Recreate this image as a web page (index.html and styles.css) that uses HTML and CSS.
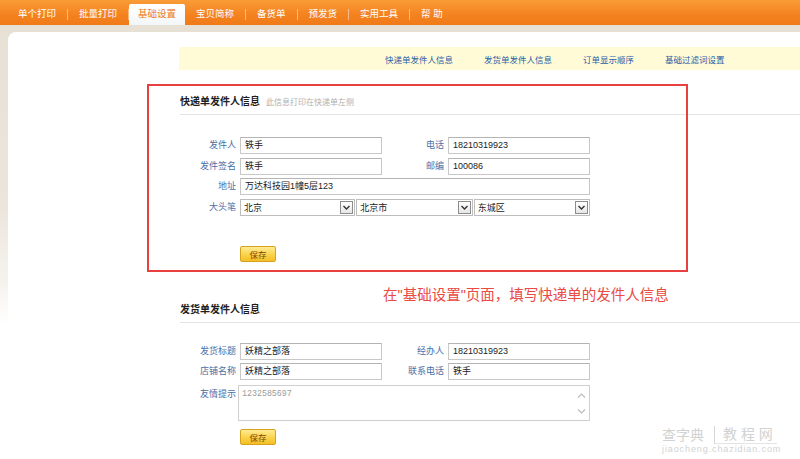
FILE: index.html
```html
<!DOCTYPE html>
<html lang="zh-CN">
<head>
<meta charset="utf-8">
<title>基础设置</title>
<link rel="stylesheet" href="styles.css">
</head>
<body>
<div class="topnav">
  <a class="nav-item">单个打印</a><span class="sep"></span>
  <a class="nav-item">批量打印</a><span class="sep"></span>
  <a class="nav-item active">基础设置</a>
  <a class="nav-item">宝贝简称</a><span class="sep"></span>
  <a class="nav-item">备货单</a><span class="sep"></span>
  <a class="nav-item">预发货</a><span class="sep"></span>
  <a class="nav-item">实用工具</a><span class="sep"></span>
  <a class="nav-item">帮 助</a>
</div>
<div class="page">
  <div class="panel">
    <div class="content">
      <div class="subnav">
        <a>快递单发件人信息</a>
        <a>发货单发件人信息</a>
        <a>订单显示顺序</a>
        <a>基础过滤词设置</a>
      </div>

      <section class="section">
        <div class="sec-head"><h2>快递单发件人信息</h2><span class="hint">此信息打印在快递单左侧</span></div>
        <div class="form">
          <label>发件人</label><div class="input">铁手</div>
          <label>电话</label><div class="input">18210319923</div>
          <label>发件签名</label><div class="input">铁手</div>
          <label>邮编</label><div class="input">100086</div>
          <label>地址</label><div class="input wide">万达科技园1幢5层123</div>
          <label>大头笔</label>
          <div class="selects">
            <div class="select s-first"><span>北京</span><span class="arrow"><svg width="9" height="9" viewBox="0 0 9 9"><polyline points="1.5,3 4.5,6 7.5,3" fill="none" stroke="#333" stroke-width="1.4"/></svg></span></div>
            <div class="select"><span>北京市</span><span class="arrow"><svg width="9" height="9" viewBox="0 0 9 9"><polyline points="1.5,3 4.5,6 7.5,3" fill="none" stroke="#333" stroke-width="1.4"/></svg></span></div>
            <div class="select"><span>东城区</span><span class="arrow"><svg width="9" height="9" viewBox="0 0 9 9"><polyline points="1.5,3 4.5,6 7.5,3" fill="none" stroke="#333" stroke-width="1.4"/></svg></span></div>
          </div>
        </div>
        <button class="btn">保存</button>
      </section>

      <section class="section second">
        <div class="sec-head"><h2>发货单发件人信息</h2></div>
        <div class="form form2">
          <label>发货标题</label><div class="input">妖精之部落</div>
          <label>经办人</label><div class="input">18210319923</div>
          <label>店铺名称</label><div class="input">妖精之部落</div>
          <label>联系电话</label><div class="input">铁手</div>
          <label class="top">友情提示</label>
          <div class="textarea">
            <span class="ta-text">1232585697</span>
            <span class="ta-scroll">
              <svg width="9" height="7" viewBox="0 0 9 7"><polyline points="1,5.5 4.5,2 8,5.5" fill="none" stroke="#bcbcbc" stroke-width="1.2"/></svg>
              <svg width="9" height="7" viewBox="0 0 9 7"><polyline points="1,1.5 4.5,5 8,1.5" fill="none" stroke="#bcbcbc" stroke-width="1.2"/></svg>
            </span>
          </div>
        </div>
        <button class="btn btn2">保存</button>
      </section>
    </div>
  </div>
</div>

<div class="callout"></div>
<div class="note">在"基础设置"页面，填写快递单的发件人信息</div>
<div class="watermark">
  <div class="wm-top"><span>查字典</span><span class="wm-box">教 程 网</span></div>
  <div class="wm-url">jiaocheng.chazidian.com</div>
</div>
</body>
</html>
```
FILE: styles.css
```css
html, body {
  margin: 0;
  padding: 0;
}
body {
  position: relative;
  width: 800px;
  height: 459px;
  overflow: hidden;
  background: #fff;
  font-family: "Liberation Sans", "Noto Sans CJK SC", sans-serif;
  color: #222;
}

/* top navigation */
.topnav {
  height: 25px;
  display: flex;
  align-items: flex-end;
  padding-left: 7px;
  background: linear-gradient(#f99c38, #f4821f 60%, #f07a18);
}
.nav-item {
  height: 21px;
  line-height: 20px;
  padding: 0 11px;
  font-size: 9.5px;
  color: #fff;
  white-space: pre;
}
.nav-item.active {
  padding: 0 9px;
  background: linear-gradient(#ffffff, #f3f6f8);
  color: #ec7a22;
  border-radius: 2px 2px 0 0;
}
.sep {
  width: 1px;
  height: 11px;
  margin-bottom: 5px;
  background: rgba(255, 255, 255, 0.45);
}

/* page */
.page {
  padding: 7px 0 0 8px;
  background: linear-gradient(#e7e0d5 0, #ebe5dc 180px, #f6f3ef 260px, #fff 300px);
}
.panel {
  background: #fff;
  border-top-left-radius: 8px;
  padding-top: 15px;
  height: 412px;
}
.content {
  margin-left: 171px;
}
.subnav {
  height: 23px;
  display: flex;
  align-items: center;
  gap: 31px;
  padding-left: 206px;
  background: #fffbd6;
  font-size: 8.5px;
  color: #2a5ea8;
}

/* sections */
.section {
  padding-left: 1px;
}
.sec-head {
  margin-top: 22px;
  height: 20px;
  line-height: 20px;
  padding-bottom: 2px;
  border-bottom: 1px solid #e4e4e4;
  display: flex;
  align-items: baseline;
  gap: 6px;
}
.second .sec-head {
  margin-top: 38px;
}
.sec-head h2 {
  margin: 0;
  font-size: 10px;
  font-weight: bold;
  color: #1e1e1e;
}
.hint {
  font-size: 8px;
  color: #b0b0b0;
}

.form {
  margin-top: 22px;
  display: grid;
  grid-template-columns: 56px 142px 58px 142px;
  column-gap: 4px;
  row-gap: 3.7px;
}
.form2 {
  margin-top: 20px;
  row-gap: 3px;
}
.form label {
  font-size: 9px;
  line-height: 17px;
  text-align: right;
  color: #4a6ea6;
}
.form label.top {
  margin-top: 4px;
  line-height: 14px;
}
.input {
  height: 17px;
  box-sizing: border-box;
  border: 1px solid #c8c8c8;
  border-top-color: #b4b4b4;
  padding-left: 4px;
  font-size: 9px;
  line-height: 15px;
  color: #222;
}
.input.wide {
  grid-column: 2 / 5;
}
.selects {
  grid-column: 2 / 5;
  display: flex;
  gap: 1px;
}
.select {
  width: 117px;
  height: 17px;
  box-sizing: border-box;
  border: 1px solid #bdbdbd;
  padding-left: 3px;
  display: flex;
  align-items: center;
  justify-content: space-between;
  font-size: 9px;
}
.select.s-first {
  width: 116px;
}
.arrow {
  width: 13px;
  height: 13px;
  box-sizing: border-box;
  margin-right: 1px;
  border: 1px solid #8c8c8c;
  background: linear-gradient(#ffffff, #e6e6e6);
  display: flex;
  align-items: center;
  justify-content: center;
}
.textarea {
  grid-column: 2 / 5;
  margin-top: 2px;
  margin-left: -2px;
  height: 36px;
  box-sizing: border-box;
  border: 1px solid #cfcfcf;
  display: flex;
  justify-content: space-between;
  padding: 2px 3px 0 3px;
}
.ta-text {
  font-family: "Liberation Mono", monospace;
  font-size: 8.3px;
  color: #9a9a9a;
  line-height: 11px;
}
.ta-scroll {
  display: flex;
  flex-direction: column;
  justify-content: space-between;
  padding: 4px 0 5px;
}
.ta-scroll svg {
  display: block;
}

.btn {
  display: block;
  margin: 30px 0 0 60px;
  width: 36px;
  height: 16px;
  padding: 0;
  box-sizing: border-box;
  border: 1px solid #d6a21c;
  border-radius: 2px;
  background: linear-gradient(#ffeb94, #fbd24a 55%, #f4bf26);
  font-family: "Noto Sans CJK SC", sans-serif;
  font-size: 8.5px;
  line-height: 14px;
  color: #7a4a0a;
}
.btn2 {
  margin-top: 8px;
}

/* annotation overlay */
.callout {
  position: absolute;
  left: 147px;
  top: 84px;
  width: 541px;
  height: 188px;
  box-sizing: border-box;
  border: 2px solid #e8403f;
}
.note {
  position: absolute;
  left: 383px;
  top: 286px;
  font-size: 14.5px;
  line-height: 18px;
  color: #ea4a44;
  white-space: nowrap;
}

/* watermark */
.watermark {
  position: absolute;
  left: 662px;
  top: 426px;
  color: #d2d2d2;
}
.wm-top {
  display: flex;
  align-items: center;
  gap: 10px;
  font-size: 14px;
  line-height: 17px;
}
.wm-box {
  border-left: 1px solid #d6d6d6;
  border-bottom: 1px solid #e4e4e4;
  padding: 0 4px 0 8px;
  letter-spacing: 0;
}
.wm-url {
  font-size: 9px;
  line-height: 11px;
  letter-spacing: 0.9px;
}
```
